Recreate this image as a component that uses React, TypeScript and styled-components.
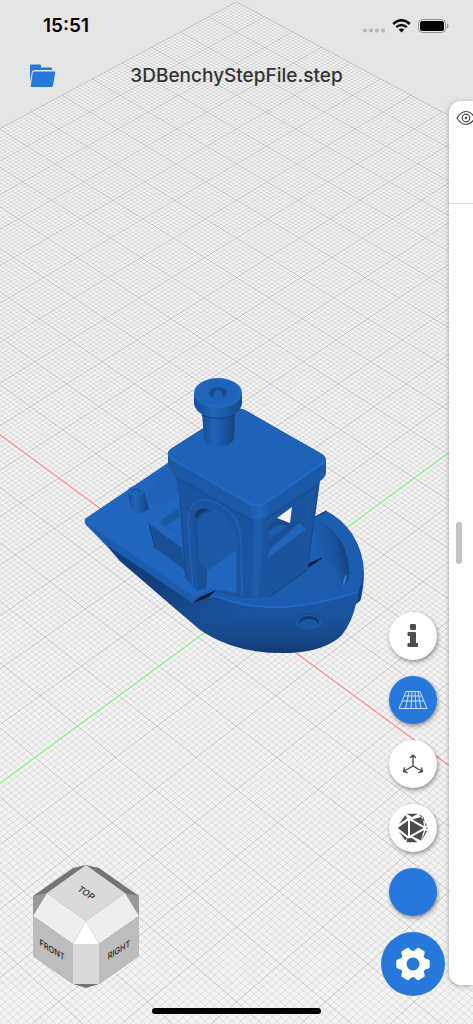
import React from "react";
import styled, { createGlobalStyle } from "styled-components";

const GlobalStyle = createGlobalStyle`
  * { box-sizing: border-box; }
  html, body, #root { height: 100%; }
  body { margin: 0; background: #e5e5e5; font-family: Inter, "Liberation Sans", sans-serif; overflow: hidden; }
  button { border: 0; padding: 0; font: inherit; cursor: pointer; }
`;

const BLUE = "#2778dc";

const Screen = styled.main`
  position: relative;
  display: flex;
  flex-direction: column;
  min-height: 100%;
  overflow: hidden;
`;

const Viewport = styled.svg`
  position: absolute;
  inset: 0;
  width: 100%;
  height: 100%;
`;

const StatusBar = styled.div`
  position: relative;
  display: flex;
  align-items: center;
  justify-content: space-between;
  height: 52px;
  padding: 0 24px 0 43px;
`;

const Clock = styled.time`
  font-size: 19px;
  line-height: 24px;
  font-weight: 600;
  color: #000;
`;

const StatusIcons = styled.div`
  display: flex;
  align-items: center;
  gap: 7px;
`;

const TitleBar = styled.header`
  position: relative;
  display: grid;
  grid-template-columns: 28px 1fr 28px;
  align-items: center;
  height: 48px;
  padding: 0 28px;
`;

const OpenButton = styled.button`
  display: flex;
  background: none;
`;

const Title = styled.h1`
  margin: 0;
  font-size: 19px;
  line-height: 24px;
  font-weight: 500;
  text-align: center;
  color: #333;
  white-space: nowrap;
`;

const Drawer = styled.aside`
  position: absolute;
  top: 101px;
  right: 0;
  bottom: 39px;
  width: 24px;
  overflow: hidden;
  border-radius: 12px 0 0 12px;
  background: #fff;
  box-shadow: 0 1px 5px rgba(0, 0, 0, 0.3);
`;

const DrawerHead = styled.div`
  height: 103px;
  padding: 7px 0 0 7px;
  border-bottom: 1px solid #dedede;
`;

const IconButton = styled.button`
  display: flex;
  background: none;
`;

const Handle = styled.div`
  position: absolute;
  top: 421px;
  left: 7px;
  width: 6px;
  height: 42px;
  border-radius: 3px;
  background: #c2c2c2;
`;

const Tools = styled.nav`
  position: absolute;
  right: 28px;
  bottom: 28px;
  display: flex;
  flex-direction: column;
  align-items: center;
  gap: 16px;
`;

const RoundButton = styled.button<{ $active?: boolean; $large?: boolean }>`
  display: flex;
  align-items: center;
  justify-content: center;
  width: ${(p) => (p.$large ? 64 : 48)}px;
  height: ${(p) => (p.$large ? 64 : 48)}px;
  border-radius: 50%;
  background: ${(p) => (p.$active ? BLUE : "#fff")};
  box-shadow: ${(p) => (p.$large ? "none" : "1px 2px 4px rgba(0, 0, 0, 0.4)")};
`;

const CubeButton = styled.button`
  position: absolute;
  left: 32px;
  bottom: 35px;
  display: flex;
  background: none;
`;

const HomeBar = styled.div`
  position: relative;
  align-self: center;
  width: 169px;
  height: 6px;
  margin: auto 0 10px;
  border-radius: 3px;
  background: #000;
`;

/* Perspective projection of the ground plane, one unit per major grid line. */
const HALF = 15;
const project = (u: number, v: number) => {
  const w = 0.00044944 + 0.00000562 * (u + v);
  return [236.5 + (0.01698 * (u - v)) / w, 1 / w - 1616];
};
const segment = (a: number[], b: number[]) =>
  `M${a[0].toFixed(2)} ${a[1].toFixed(2)}L${b[0].toFixed(2)} ${b[1].toFixed(2)}`;
const lineU = (u: number) => segment(project(u, -HALF), project(u, HALF));
const lineV = (v: number) => segment(project(-HALF, v), project(HALF, v));

const gridPath = (divisions: number, major: boolean) => {
  const lines: string[] = [];
  for (let i = -HALF * divisions; i <= HALF * divisions; i++) {
    if (major ? i === 0 : i % divisions === 0) continue;
    lines.push(lineU(i / divisions), lineV(i / divisions));
  }
  return lines;
};
const minorLines = gridPath(10, false);
const majorLines = gridPath(1, true);

const ground = [project(HALF, HALF), project(HALF, -HALF), project(-HALF, -HALF), project(-HALF, HALF)]
  .map((p) => p.join(","))
  .join(" ");

/* Every line is its own path, so that crossings come out darker. */
const Grid = () => (
  <g fill="none">
    <polygon points={ground} fill="#f3f3f3" />
    <g stroke="#000" strokeOpacity="0.12" strokeWidth="0.8">
      {minorLines.map((d) => <path key={d} d={d} />)}
    </g>
    <g stroke="#000" strokeOpacity="0.2" strokeWidth="0.9">
      {majorLines.map((d) => <path key={d} d={d} />)}
    </g>
    <path d={lineV(0)} stroke="#84ee84" strokeWidth="1.2" />
    <path d={lineU(0)} stroke="#f98686" strokeWidth="1.2" />
  </g>
);

const Boat = () => (
  <g strokeLinejoin="round" strokeLinecap="round">
    <defs>
      <linearGradient id="hull" x1="0" y1="0" x2="0" y2="1">
        <stop offset="0.4" stopColor="#1b5bac" />
        <stop offset="0.8" stopColor="#1a539e" />
        <stop offset="0.93" stopColor="#164788" />
        <stop offset="1" stopColor="#113a72" />
      </linearGradient>
      <linearGradient id="side" x1="100" y1="535" x2="215" y2="650" gradientUnits="userSpaceOnUse">
        <stop offset="0" stopColor="#123d78" />
        <stop offset="0.5" stopColor="#133f7c" />
        <stop offset="1" stopColor="#174b8f" stopOpacity="0" />
      </linearGradient>
      <linearGradient id="bow" x1="312" y1="555" x2="351" y2="545" gradientUnits="userSpaceOnUse">
        <stop offset="0" stopColor="#1e63b8" />
        <stop offset="0.6" stopColor="#19529b" />
        <stop offset="1" stopColor="#103767" />
      </linearGradient>
      <linearGradient id="tube" x1="0" y1="0" x2="1" y2="0">
        <stop offset="0" stopColor="#174c92" />
        <stop offset="0.35" stopColor="#1f65bb" />
        <stop offset="0.6" stopColor="#1b59a8" />
        <stop offset="1" stopColor="#144382" />
      </linearGradient>
      <linearGradient id="ring" x1="0" y1="0" x2="1" y2="0">
        <stop offset="0" stopColor="#184f98" />
        <stop offset="0.4" stopColor="#1f65bb" />
        <stop offset="1" stopColor="#17498b" />
      </linearGradient>
      <linearGradient id="corner" x1="0" y1="0" x2="1" y2="0">
        <stop offset="0" stopColor="#2064b9" stopOpacity="0" />
        <stop offset="0.5" stopColor="#2167bd" />
        <stop offset="1" stopColor="#2064b9" stopOpacity="0" />
      </linearGradient>
    </defs>

    {/* hull */}
    <path d="M85 519L168 463L230 470L315 517L326 511Q342 519 352 534Q364 553 364 573Q364 588 360 601L356 604Q352 622 342 635Q326 651 290 653Q256 654 230 645Q211 638 199 629L120 561L104 543L87 526Q84 523 85 519Z" fill="url(#hull)" />
    <path d="M104 541L193 603L216 592L240 605L240 648Q211 638 199 629L120 561Z" fill="url(#side)" />

    {/* deck and stern bulwark */}
    <path d="M85 519L168 463L182 470L260 590L216 590L193 603L104 543L87 525Q84 522 85 519Z" fill="#2066bc" />
    <path d="M88 524L102 534L195 597L207 594L193 603L104 543Z" fill="#1c5caf" />
    <path d="M103 521L162 482L174 486" fill="none" stroke="#1e61b5" />
    <path d="M103 520L106 524L190 582" fill="none" stroke="#1e61b5" />
    <path d="M168 475L167 484" stroke="#2670cb" strokeWidth="2" />
    <path d="M166 465L177 472L180 492L160 506L144 500Z" fill="#1f63b8" />

    {/* stern box */}
    <path d="M149 524L177 506L182 550Z" fill="#2066bc" />
    <path d="M159 522L179 508L181 536Z" fill="#1b58a4" />
    <path d="M166 526L180 517L181 535Z" fill="#2066bc" />
    <path d="M149 524L182 548L186 571L155 548Z" fill="#194f97" />
    <path d="M149 524L155 548" stroke="#144385" />

    {/* stern post */}
    <path d="M128 493L131 509Q139 517 149 509L144 491Z" fill="url(#tube)" />
    <ellipse cx="136" cy="491" rx="8" ry="5" fill="#2067be" />
    <ellipse cx="136" cy="491" rx="5" ry="3" fill="#1a549f" />
    <ellipse cx="136" cy="492" rx="3" ry="1.500" fill="#2066bc" />

    {/* bow interior */}
    <path d="M315 517L326 511Q342 519 352 534Q364 553 363 574L358 592Q353 597 344 588L322 558L308 566Z" fill="#1c5db0" />
    <path d="M314 518Q331 524 342 543Q350 558 349 578L344 588Q339 571 322 558L308 567Z" fill="url(#bow)" />
    <path d="M347 575L344 587Q342 584 345 576Z" fill="#3683df" />
    <path d="M268 597L322 558Q337 568 345 589L358 590L300 600Z" fill="#1c5cac" />
    <path d="M269 597L307 570" stroke="#123b73" />
    <path d="M307 568L322 558L310 563Z" fill="#071f43" stroke="#071f43" />
    <path d="M315 517L326 511" stroke="#0d2c59" />

    {/* front gunwale */}
    <path d="M196 597Q208 588 221 592Q240 600 268 597Q320 595 350 584Q360 578 363 569L361 586L358 592Q320 604 288 607Q250 609 221 598Q208 593 201 600Z" fill="#1c5db1" />
    <path d="M207 597Q214 595 221 598Q250 609 288 607Q320 604 358 592" fill="none" stroke="#226cc8" strokeWidth="1.5" />
    <path d="M359 591L363 579L361 599L357 603Z" fill="#133f7a" />
    <path d="M193 603L200 597L216 590L209 597Z" fill="#06172f" />
    <ellipse cx="309" cy="622" rx="15" ry="8" fill="#1b56a4" stroke="#184c90" />
    <ellipse cx="309" cy="622" rx="10" ry="6" fill="#113a70" />
    <ellipse cx="309" cy="624" rx="9" ry="5" fill="#1b59a8" />

    {/* cabin, arched side */}
    <path d="M175 472L256 516L257 597Q235 600 221 592L206 586L198 591L186 579L180 503Z" fill="#1a549f" />
    <path d="M193 588L188 523Q188 501 204 500Q224 500 237 522Q241 530 241 548L242 596" fill="none" stroke="#1e61b5" strokeWidth="1.500" />
    <path d="M198 590L194 520Q194 505 205 506Q222 508 234 529Q237 536 237 548L237 594L216 590Z" fill="#1b59a6" />
    <path d="M207 571L236 550L236 593Q220 588 206 590Z" fill="#2066bc" />
    <path d="M194 522Q194 506 205 508Q210 509 213 512Q202 511 198 523L199 562L207 571V586L198 590Z" fill="#194f97" />
    <path d="M195 514Q199 506 209 510Q201 511 196 519Z" fill="#12396f" />
    <path d="M180 503L186 579" stroke="#14407b" strokeDasharray="2 2" />
    <path d="M176 478L252 521" stroke="#17498c" />

    {/* cabin, window side */}
    <path d="M253 516L321 474L308 568L268 597H253Z" fill="#1a539e" />
    <path d="M254 518H262L259 597H252Z" fill="#1d5bab" />
    <path d="M264 521L318 485L308 567" fill="none" stroke="#16488b" />
    <path d="M263 521L261 568" stroke="#1e60b2" />
    <path d="M311 492L305 532" stroke="#1d5caa" />
    <path d="M269 524L292 507L290 524L303 521L306 528L268 558Z" fill="#194f98" />
    <path d="M269 550L299 523L306 529L268 558Z" fill="#2066bc" />
    <path d="M269 527Q276 519 286 521L288 525L270 538Z" fill="#174a8e" />
    <path d="M269 531Q277 522 287 526L269 540Z" fill="#1c5cac" />
    <path d="M277 518L292 507L290 523Z" fill="#f4f4f4" />

    {/* roof */}
    <path d="M168 455Q167 451 172 448L232 410Q239 407 245 410L322 454Q326 456 326 461V473Q325 478 320 481L265 518Q258 522 250 518L172 473Q168 470 168 465Z" fill="#1b58a6" />
    <path d="M246 503H272V514L265 518Q258 522 250 518L246 516Z" fill="url(#corner)" />
    <path d="M169 454Q168 451 172 448L232 410Q239 407 245 410L322 454Q326 458 323 463L267 502Q258 508 250 504L172 459Q169 457 169 454Z" fill="#1f63b8" />
    <path d="M169 455Q169 457 172 459L250 504Q258 508 267 502L323 463Q325 461 325 459" fill="none" stroke="#236bc6" strokeWidth="2" />

    {/* funnel */}
    <path d="M202 412L204 439Q207 446 219 447Q231 446 234 439L235 412Z" fill="url(#tube)" />
    <path d="M194 393V404Q197 417 218 418Q239 417 242 404V393Z" fill="url(#ring)" />
    <path d="M202 415Q218 422 235 415" fill="none" stroke="#143f7c" />
    <ellipse cx="218" cy="393" rx="24" ry="15" fill="#2168c1" />
    <ellipse cx="218" cy="392" rx="21" ry="13" fill="#1f64ba" />
    <ellipse cx="218" cy="393" rx="9" ry="6" fill="#174b92" />
    <path d="M213 398Q214 390 218 390Q222 390 223 398Q218 400 213 398Z" fill="#1e61b5" />
  </g>
);

const Cube = () => (
  <svg width="108" height="125" viewBox="32 864 108 125">
    <polygon points="86,865 99,868 139,896 139,956 99,984 86,988 73,984 33,956 33,896 73,868" fill="#747474" />
    <polygon points="33,896 47,893 33,916" fill="#999" />
    <polygon points="139,896 125,893 139,916" fill="#999" />
    <polygon points="86,865 47,893 86,921 125,893" fill="#dadada" />
    <polygon points="47,893 86,921 73,944 33,916" fill="#eee" />
    <polygon points="125,893 86,921 99,944 139,916" fill="#eee" />
    <polygon points="86,921 99,944 73,944" fill="#fff" />
    <polygon points="33,916 73,944 73,984 33,956" fill="#bdbdbd" />
    <polygon points="139,916 99,944 99,984 139,956" fill="#bdbdbd" />
    <rect x="73" y="944" width="26" height="40" fill="#dadada" />
    <g fontFamily="Inter, sans-serif" fontSize="9" fontWeight="500" textAnchor="middle" fill="#222">
      <text transform="matrix(0.82 0.57 -0.7 0.7 86 893)" y="3">TOP</text>
      <text transform="matrix(0.82 0.5 0 1 52 950)" y="3">FRONT</text>
      <text transform="matrix(0.82 -0.5 0 1 119 950)" y="3">RIGHT</text>
    </g>
  </svg>
);

const gearPath = (() => {
  const pts: string[] = [];
  for (let k = 0; k < 6; k++) {
    [[-20, 11.6], [-11, 15.2], [11, 15.2], [20, 11.6]].forEach(([a, r]) => {
      const t = ((k * 60 + a) * Math.PI) / 180;
      pts.push(`${(r * Math.cos(t)).toFixed(2)} ${(r * Math.sin(t)).toFixed(2)}`);
    });
  }
  return `M${pts.join("L")}Z`;
})();

const GearIcon = () => (
  <svg width="36" height="36" viewBox="-18 -18 36 36">
    <path d={gearPath} fill="#fff" stroke="#fff" strokeWidth="3.500" strokeLinejoin="round" />
    <circle r="6.5" fill={BLUE} />
  </svg>
);

const InfoIcon = () => (
  <svg width="12" height="24" viewBox="0 0 12 24" fill="#4c4c4c">
    <rect x="3" y="0" width="6" height="6" rx="1.2" />
    <path d="M1.500 8H8a1 1 0 0 1 1 1v10h1a1 1 0 0 1 1 1v2a1 1 0 0 1-1 1H1.500a1 1 0 0 1-1-1v-2a1 1 0 0 1 1-1h1.500v-7H1.500a1 1 0 0 1-1-1V9a1 1 0 0 1 1-1Z" />
  </svg>
);

const PlaneIcon = () => (
  <svg width="30" height="20" viewBox="0 0 30 20" fill="none" stroke="#dcebff" strokeWidth="0.9">
    <path d="M8 1.500H22L29 18.500H1ZM6 6H24M4 11H26M11 1.500L7.500 18.500M14 1.500L13 18.500M17 1.500L18 18.500M20 1.500L23 18.500" />
  </svg>
);

const AxesIcon = () => (
  <svg width="22" height="20" viewBox="0 0 22 20" fill="none" stroke="#4c4c4c" strokeWidth="1.400" strokeLinecap="round" strokeLinejoin="round">
    <path d="M11 12V1M8.500 3.500L11 1L13.500 3.500M11 12L1.500 17.500M2.500 14L1.500 17.500L5 18.500M11 12L20.500 17.500M19.500 14L20.500 17.500L17 18.500" />
  </svg>
);

const SolidIcon = () => (
  <svg width="32" height="30" viewBox="0 0 32 30" fill="#4c4c4c">
    <path d="M.8 15L11 7.500V23ZM13 7.500L26.500 15L13 22.500ZM15.500 6.500L25.500 3.500L27 13ZM15.500 23.500L27 17L24 27.500ZM9.500 .8H21L15 4ZM2 11L8.500 2L10 5.500ZM2 19L10 25L8.500 27.500ZM10 25.500L15 25L20.500 29.200H9.500ZM22 1.300L30 12.500L28.500 13L26.500 4ZM30.500 14.500L28.500 15L30.500 16ZM30 18L24.500 28L28.500 17.500Z" />
  </svg>
);

const FolderIcon = () => (
  <svg width="28" height="24" viewBox="0 0 28 24" fill={BLUE}>
    <path d="M2 1.500Q2 .5 3 .5H12Q13 .5 13 1.500V3.500H23Q24 3.500 24 4.500V6H7Q4.500 6 4 7.500L2 18Z" />
    <path d="M6 7.500H26.500Q27.500 7.500 27.200 8.700L25 21.500Q24.700 23 23.500 23H3.500Q2.500 23 2.800 21.800L4.800 8.500Q5 7.500 6 7.500Z" />
  </svg>
);

const EyeIcon = () => (
  <svg width="20" height="20" viewBox="0 0 20 20" fill="none" stroke="#444" strokeWidth="1.200">
    <path d="M1 10Q5 3.500 10 3.500T19 10Q15 16.500 10 16.500T1 10Z" />
    <circle cx="10" cy="10" r="3.800" />
    <circle cx="10" cy="10" r="1.200" fill="#444" stroke="none" />
  </svg>
);

const SignalIcon = () => (
  <svg width="22" height="14" viewBox="0 0 22 14" fill="#b5b5b5">
    {[2, 8, 14, 20].map((x) => (
      <circle key={x} cx={x} cy="11.500" r="2" />
    ))}
  </svg>
);

const WifiIcon = () => (
  <svg width="19" height="14" viewBox="0 0 19 14" fill="none" stroke="#000" strokeWidth="2.400">
    <path d="M1.200 5Q9.500 -2.400 17.800 5" />
    <path d="M4.200 8.200Q9.500 3.600 14.800 8.200" />
    <path d="M9.500 13.500L6.700 10.600Q9.500 8.200 12.300 10.600Z" fill="#000" stroke="none" />
  </svg>
);

const BatteryIcon = () => (
  <svg width="31" height="14" viewBox="0 0 31 14">
    <rect x="0.500" y="0.500" width="27" height="13" rx="4" fill="none" stroke="#8e8e8e" />
    <rect x="2" y="2" width="24" height="10" rx="2.500" fill="#000" />
    <path d="M29 4.500Q30.500 5.500 30.500 7T29 9.500Z" fill="#8e8e8e" />
  </svg>
);

export default function App() {
  return (
    <Screen>
      <GlobalStyle />
      <Viewport viewBox="0 0 473 1024" preserveAspectRatio="xMidYMid slice" role="img" aria-label="3D model">
        <Grid />
        <Boat />
      </Viewport>
      <StatusBar>
        <Clock>15:51</Clock>
        <StatusIcons>
          <SignalIcon />
          <WifiIcon />
          <BatteryIcon />
        </StatusIcons>
      </StatusBar>
      <TitleBar>
        <OpenButton aria-label="Open file">
          <FolderIcon />
        </OpenButton>
        <Title>3DBenchyStepFile.step</Title>
      </TitleBar>
      <HomeBar />
      <CubeButton aria-label="View orientation">
        <Cube />
      </CubeButton>
      <Drawer>
        <DrawerHead>
          <IconButton aria-label="Visibility">
            <EyeIcon />
          </IconButton>
        </DrawerHead>
        <Handle />
      </Drawer>
      <Tools>
        <RoundButton aria-label="Information"><InfoIcon /></RoundButton>
        <RoundButton $active aria-label="Grid"><PlaneIcon /></RoundButton>
        <RoundButton aria-label="Axes"><AxesIcon /></RoundButton>
        <RoundButton aria-label="Display mode"><SolidIcon /></RoundButton>
        <RoundButton $active aria-label="Model colour" />
        <RoundButton $large $active aria-label="Settings"><GearIcon /></RoundButton>
      </Tools>
    </Screen>
  );
}
